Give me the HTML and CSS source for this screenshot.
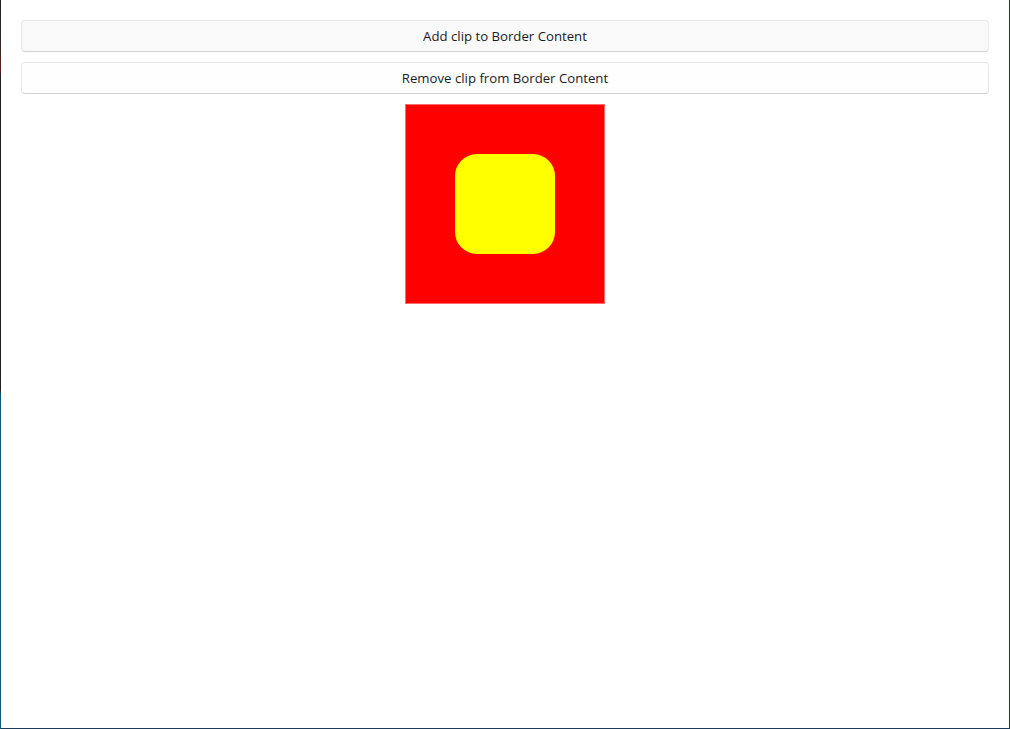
FILE: index.html
```html
<!DOCTYPE html>
<html>
<head>
<meta charset="utf-8">
<link rel="stylesheet" href="styles.css">
</head>
<body>
<div class="frame">
  <div class="edge"></div>
  <div class="window">
    <main class="content">
      <button class="btn btn-first">Add clip to Border Content</button>
      <button class="btn">Remove clip from Border Content</button>
      <div class="border-box">
        <div class="inner"></div>
      </div>
    </main>
  </div>
</div>
</body>
</html>
```
FILE: styles.css
```css
html, body {
  margin: 0;
  padding: 0;
  background: #ffffff;
}
.frame {
  display: flex;
  width: 1010px;
  height: 729px;
}
.edge {
  width: 1px;
  flex: none;
  background: linear-gradient(to bottom, #202020 0, #2a2a2a 40px, #5a2020 70px, #1e1e1e 75px, #202020 390px, #0d5a72 395px, #0d5a72 729px);
}
.window {
  flex: 1;
  box-sizing: border-box;
  border-right: 1px solid #1d3a5a;
  border-bottom: 1px solid #1d3a5a;
  background: #ffffff;
}
.content {
  display: flex;
  flex-direction: column;
  align-items: center;
  gap: 10px;
  padding: 20px 20px 0 20px;
}
.btn {
  align-self: stretch;
  height: 32px;
  box-sizing: border-box;
  border: 1px solid #e8e8e8;
  border-bottom-color: #d2d2d2;
  border-radius: 4px;
  background: #fefefe;
  color: #1b1b1b;
  font-family: "Open Sans", "Noto Sans", sans-serif;
  font-size: 13.2px;
  padding: 0;
}
.btn-first {
  background: #f9f9f9;
}
.border-box {
  width: 200px;
  height: 200px;
  box-sizing: border-box;
  background: #ff0000;
  border: 1px solid #ff6a6a;
  display: flex;
  align-items: center;
  justify-content: center;
}
.inner {
  width: 100px;
  height: 100px;
  background: #ffff00;
  border-radius: 22px;
}
```
